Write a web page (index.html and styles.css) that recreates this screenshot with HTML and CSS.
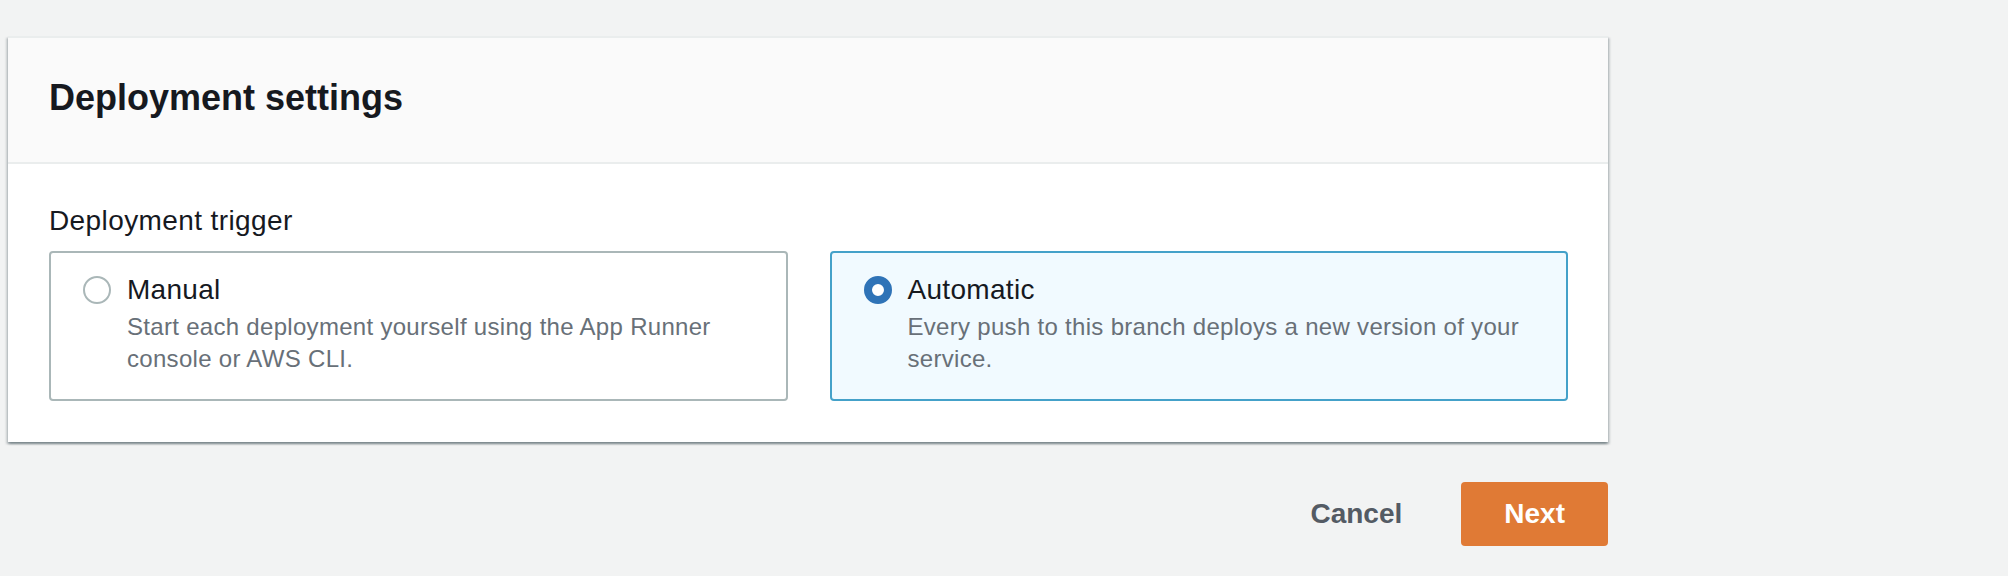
FILE: index.html
```html
<!DOCTYPE html>
<html lang="en">
<head>
    <meta charset="UTF-8" />
    <title>Deployment settings</title>
    <link rel="stylesheet" href="styles.css">
</head>
<body>

<div class="page">
    <div class="card">
        <div class="card-header">
            <h2>Deployment settings</h2>
        </div>
        <div class="card-body">
            <div class="field-label">Deployment trigger</div>
            <div class="tiles">
                <div class="tile" onclick="selectTile(this)">
                    <span class="radio"></span>
                    <div class="tile-text">
                        <div class="tile-title">Manual</div>
                        <div class="tile-desc">Start each deployment yourself using the App Runner console or AWS CLI.</div>
                    </div>
                </div>
                <div class="tile selected" onclick="selectTile(this)">
                    <span class="radio"></span>
                    <div class="tile-text">
                        <div class="tile-title">Automatic</div>
                        <div class="tile-desc">Every push to this branch deploys a new version of your service.</div>
                    </div>
                </div>
            </div>
        </div>
    </div>

    <div class="actions">
        <button class="btn-link">Cancel</button>
        <button class="btn-primary">Next</button>
    </div>
</div>

<script>
    function selectTile(tile) {
        document.querySelectorAll('.tile').forEach(t => t.classList.remove('selected'));
        tile.classList.add('selected');
    }
</script>
</body>
</html>
```

FILE: styles.css
```css
body {
    font-family: "Liberation Sans", Arial, sans-serif;
    margin: 0;
    background-color: #f2f3f3;
    color: #16191f;
}

.page {
    width: 1600px;
    padding: 36px 0 0 8px;
}

.card {
    background-color: #fff;
    border-top: 2px solid #eaeded;
    box-shadow: 0 2px 2px rgba(0, 28, 36, 0.3), 2px 2px 2px rgba(0, 28, 36, 0.15), -2px 2px 2px rgba(0, 28, 36, 0.15);
}

.card-header {
    background-color: #fafafa;
    border-bottom: 2px solid #eaeded;
    padding: 38px 40px 42px 41px;
}

.card-header h2 {
    margin: 0;
    font-size: 36px;
    line-height: 44px;
    font-weight: bold;
}

.card-body {
    padding: 37px 40px 41px 41px;
}

.field-label {
    font-size: 28px;
    line-height: 40px;
    letter-spacing: 0.4px;
    margin-bottom: 10px;
}

.tiles {
    display: grid;
    grid-template-columns: 1fr 1fr;
    gap: 42px;
}

.tile {
    display: flex;
    gap: 16px;
    border: 2px solid #aab7b8;
    border-radius: 4px;
    padding: 16px 32px 24px 32px;
    cursor: pointer;
}

.tile.selected {
    background-color: #f1faff;
    border-color: #44a1c9;
}

.radio {
    flex: none;
    width: 28px;
    height: 28px;
    margin-top: 7px;
    box-sizing: border-box;
    border: 2px solid #aab7b8;
    border-radius: 50%;
    background-color: #fff;
}

.tile.selected .radio {
    border: 8px solid #2f73b7;
}

.tile-title {
    font-size: 28px;
    line-height: 42px;
    letter-spacing: 0.3px;
}

.tile-desc {
    font-size: 24px;
    line-height: 32px;
    letter-spacing: 0.3px;
    color: #687078;
}

.actions {
    display: flex;
    justify-content: flex-end;
    gap: 20px;
    margin-top: 40px;
}

.btn-link,
.btn-primary {
    font-family: inherit;
    font-size: 28px;
    font-weight: bold;
    height: 64px;
    border: none;
    border-radius: 4px;
    cursor: pointer;
}

.btn-link {
    background: none;
    color: #545b64;
    padding: 0 39px;
}

.btn-primary {
    background-color: #e07a35;
    color: #fff;
    padding: 0 43px;
}
```
